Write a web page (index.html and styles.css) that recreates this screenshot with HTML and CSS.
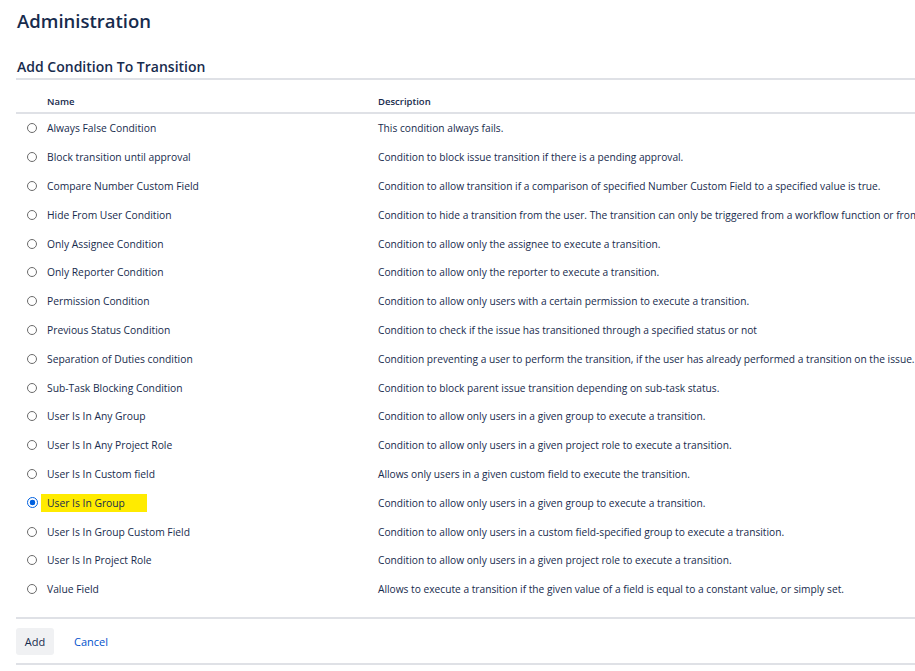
FILE: index.html
```html
<!DOCTYPE html>
<html>
<head>
<meta charset="utf-8">
<link rel="stylesheet" href="styles.css">
</head>
<body>
<div class="page">
  <h1 class="title">Administration</h1>
  <h2 class="subtitle">Add Condition To Transition</h2>
  <table class="conds">
    <thead>
      <tr><th class="c-radio"></th><th class="c-name">Name</th><th class="c-desc">Description</th></tr>
    </thead>
    <tbody>
      <tr><td class="c-radio"><span class="radio"></span></td><td class="c-name">Always False Condition</td><td class="c-desc">This condition always fails.</td></tr>
      <tr><td class="c-radio"><span class="radio"></span></td><td class="c-name">Block transition until approval</td><td class="c-desc">Condition to block issue transition if there is a pending approval.</td></tr>
      <tr><td class="c-radio"><span class="radio"></span></td><td class="c-name">Compare Number Custom Field</td><td class="c-desc">Condition to allow transition if a comparison of specified Number Custom Field to a specified value is true.</td></tr>
      <tr><td class="c-radio"><span class="radio"></span></td><td class="c-name">Hide From User Condition</td><td class="c-desc">Condition to hide a transition from the user. The transition can only be triggered from a workflow function or from a remote API call.</td></tr>
      <tr><td class="c-radio"><span class="radio"></span></td><td class="c-name">Only Assignee Condition</td><td class="c-desc">Condition to allow only the assignee to execute a transition.</td></tr>
      <tr><td class="c-radio"><span class="radio"></span></td><td class="c-name">Only Reporter Condition</td><td class="c-desc">Condition to allow only the reporter to execute a transition.</td></tr>
      <tr><td class="c-radio"><span class="radio"></span></td><td class="c-name">Permission Condition</td><td class="c-desc">Condition to allow only users with a certain permission to execute a transition.</td></tr>
      <tr><td class="c-radio"><span class="radio"></span></td><td class="c-name">Previous Status Condition</td><td class="c-desc">Condition to check if the issue has transitioned through a specified status or not</td></tr>
      <tr><td class="c-radio"><span class="radio"></span></td><td class="c-name">Separation of Duties condition</td><td class="c-desc">Condition preventing a user to perform the transition, if the user has already performed a transition on the issue.</td></tr>
      <tr><td class="c-radio"><span class="radio"></span></td><td class="c-name">Sub-Task Blocking Condition</td><td class="c-desc">Condition to block parent issue transition depending on sub-task status.</td></tr>
      <tr><td class="c-radio"><span class="radio"></span></td><td class="c-name">User Is In Any Group</td><td class="c-desc">Condition to allow only users in a given group to execute a transition.</td></tr>
      <tr><td class="c-radio"><span class="radio"></span></td><td class="c-name">User Is In Any Project Role</td><td class="c-desc">Condition to allow only users in a given project role to execute a transition.</td></tr>
      <tr><td class="c-radio"><span class="radio"></span></td><td class="c-name">User Is In Custom field</td><td class="c-desc">Allows only users in a given custom field to execute the transition.</td></tr>
      <tr><td class="c-radio"><span class="radio checked"></span></td><td class="c-name"><span class="hl">User Is In Group</span></td><td class="c-desc">Condition to allow only users in a given group to execute a transition.</td></tr>
      <tr><td class="c-radio"><span class="radio"></span></td><td class="c-name">User Is In Group Custom Field</td><td class="c-desc">Condition to allow only users in a custom field-specified group to execute a transition.</td></tr>
      <tr><td class="c-radio"><span class="radio"></span></td><td class="c-name">User Is In Project Role</td><td class="c-desc">Condition to allow only users in a given project role to execute a transition.</td></tr>
      <tr><td class="c-radio"><span class="radio"></span></td><td class="c-name">Value Field</td><td class="c-desc">Allows to execute a transition if the given value of a field is equal to a constant value, or simply set.</td></tr>
    </tbody>
  </table>
  <div class="actions">
    <button class="btn">Add</button>
    <a class="cancel" href="#">Cancel</a>
  </div>
</div>
</body>
</html>
```

FILE: styles.css
```css
html, body {
  margin: 0;
  padding: 0;
  overflow: hidden;
  background: #fff;
}
body {
  font-family: "Open Sans", "Noto Sans", sans-serif;
  color: #172b4d;
}
.page {
  width: 1200px;
  padding: 0 0 0 16px;
}
.title {
  margin: 0;
  padding-top: 7px;
  height: 40px;
  font-size: 18.5px;
  font-weight: 600;
  line-height: 28px;
  padding-left: 1px;
  box-sizing: border-box;
}
.subtitle {
  margin: 14px 0 0 0;
  font-size: 14px;
  font-weight: 600;
  line-height: 20px;
  padding: 3px 0 1px 1px;
  border-bottom: 2px solid #dfe1e6;
}
.conds {
  border-collapse: collapse;
  width: 100%;
  margin-top: 6px;
  font-size: 10.3px;
  white-space: nowrap;
}
.conds th {
  text-align: left;
  font-weight: 600;
  font-size: 9.5px;
  height: 22px;
  padding: 0 0 4px 0;
  vertical-align: bottom;
  border-bottom: 2px solid #dfe1e6;
}
.conds td {
  height: 28.8px;
  padding: 0;
  vertical-align: middle;
}
.conds td.c-desc {
  font-size: 10.2px;
}
.c-radio {
  width: 31px;
}
.c-name {
  width: 331px;
}
.radio {
  display: block;
  box-sizing: border-box;
  width: 10px;
  height: 10px;
  margin-left: 11px;
  border: 1px solid #6b6b6b;
  border-radius: 50%;
}
.radio.checked {
  width: 11px;
  height: 11px;
  margin-left: 10.5px;
  border: 1.5px solid #0060df;
  background: radial-gradient(circle, #0060df 0 2.6px, #fff 3.1px);
}
.hl {
  background: #ffeb00;
  padding: 2px 22px 2px 6px;
  margin-left: -6px;
}
.actions {
  margin-top: 13px;
  border-top: 2px solid #dfe1e6;
  border-bottom: 2px solid #dfe1e6;
  padding: 9px 0 8px 0;
  display: flex;
  align-items: center;
  gap: 20px;
}
.btn {
  font-family: inherit;
  font-size: 11px;
  color: #172b4d;
  background: #f0f1f3;
  border: none;
  border-radius: 3px;
  height: 27px;
  width: 38px;
  padding: 0;
}
.cancel {
  font-size: 11px;
  color: #0052cc;
  text-decoration: none;
}
```
